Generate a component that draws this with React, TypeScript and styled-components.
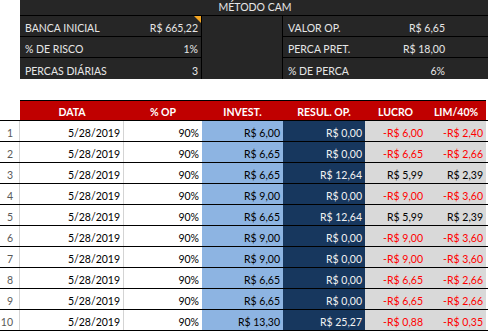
import React from "react";
import styled, { createGlobalStyle } from "styled-components";

const GlobalStyle = createGlobalStyle`
  body {
    margin: 0;
    background: #ffffff;
    font-family: Lato, "Liberation Sans", sans-serif;
    font-size: 10.5px;
  }
`;

interface Entry {
  data: string;
  op: string;
  invest: string;
  resul: string;
  lucro: string;
  lim: string;
}

const rows: Entry[] = [
  { data: "5/28/2019", op: "90%", invest: "R$ 6,00", resul: "R$ 0,00", lucro: "-R$ 6,00", lim: "-R$ 2,40" },
  { data: "5/28/2019", op: "90%", invest: "R$ 6,65", resul: "R$ 0,00", lucro: "-R$ 6,65", lim: "-R$ 2,66" },
  { data: "5/28/2019", op: "90%", invest: "R$ 6,65", resul: "R$ 12,64", lucro: "R$ 5,99", lim: "R$ 2,39" },
  { data: "5/28/2019", op: "90%", invest: "R$ 9,00", resul: "R$ 0,00", lucro: "-R$ 9,00", lim: "-R$ 3,60" },
  { data: "5/28/2019", op: "90%", invest: "R$ 6,65", resul: "R$ 12,64", lucro: "R$ 5,99", lim: "R$ 2,39" },
  { data: "5/28/2019", op: "90%", invest: "R$ 9,00", resul: "R$ 0,00", lucro: "-R$ 9,00", lim: "-R$ 3,60" },
  { data: "5/28/2019", op: "90%", invest: "R$ 9,00", resul: "R$ 0,00", lucro: "-R$ 9,00", lim: "-R$ 3,60" },
  { data: "5/28/2019", op: "90%", invest: "R$ 6,65", resul: "R$ 0,00", lucro: "-R$ 6,65", lim: "-R$ 2,66" },
  { data: "5/28/2019", op: "90%", invest: "R$ 6,65", resul: "R$ 0,00", lucro: "-R$ 6,65", lim: "-R$ 2,66" },
  { data: "5/28/2019", op: "90%", invest: "R$ 13,30", resul: "R$ 25,27", lucro: "-R$ 0,88", lim: "-R$ 0,35" },
];

const COLS = "20px 104px 78px 81px 82px 61px 60px 2px";

function App() {
  const neg = (v: string) => (v.startsWith("-") ? "#ff0000" : "#000000");

  return (
    <Page>
      <GlobalStyle />
      <Summary>
        <SummaryTitle>MÉTODO CAM</SummaryTitle>
        <LeftBlock>
          <SumRow>
            <span>BANCA INICIAL</span>
            <span>R$ 665,22</span>
            <CommentMark />
          </SumRow>
          <SumRow>
            <span>% DE RISCO</span>
            <span>1%</span>
          </SumRow>
          <SumRow>
            <span>PERCAS DIÁRIAS</span>
            <span>3</span>
          </SumRow>
        </LeftBlock>
        <MiddleBlock />
        <RightBlock>
          <SumRow $wide>
            <span>VALOR OP.</span>
            <span>R$ 6,65</span>
          </SumRow>
          <SumRow $wide>
            <span>PERCA PRET.</span>
            <span>R$ 18,00</span>
          </SumRow>
          <SumRow $wide>
            <span>% DE PERCA</span>
            <span>6%</span>
          </SumRow>
        </RightBlock>
      </Summary>

      <Table>
        <HeaderRow>
          <Blank />
          <HeadCell>DATA</HeadCell>
          <HeadCell>% OP</HeadCell>
          <HeadCell>INVEST.</HeadCell>
          <HeadCell>RESUL. OP.</HeadCell>
          <HeadCell>LUCRO</HeadCell>
          <HeadCell>LIM/40%</HeadCell>
          <Blank />
        </HeaderRow>
        {rows.map((r, i) => (
          <Row key={i}>
            <RowNum>{i + 1}</RowNum>
            <Cell $line>{r.data}</Cell>
            <Cell>{r.op}</Cell>
            <Cell $bg="#8db4e2">{r.invest}</Cell>
            <Cell $bg="#17375e" $color="#f2f2f2">{r.resul}</Cell>
            <Cell $bg="#d9d9d9" $color={neg(r.lucro)}>{r.lucro}</Cell>
            <Cell $bg="#d9d9d9" $color={neg(r.lim)}>{r.lim}</Cell>
            <Blank />
          </Row>
        ))}
      </Table>
    </Page>
  );
}

const Page = styled.div`
  width: 488px;
  height: 332px;
  overflow: hidden;
`;

const Summary = styled.div`
  margin-left: 20px;
  width: 468px;
  height: 79px;
  background: #262626;
  color: #e6e6e6;
  display: grid;
  grid-template-columns: 182px 81px 205px;
  grid-template-rows: 16px 63px;
`;

const SummaryTitle = styled.div`
  grid-column: 1 / -1;
  border-bottom: 1px solid #000;
  box-sizing: border-box;
  text-align: center;
  line-height: 14px;
  padding-left: 2px;
`;

const LeftBlock = styled.div`
  display: flex;
  flex-direction: column;
  border-right: 1px solid #000;
`;

const MiddleBlock = styled.div`
  border-right: 1px solid #000;
`;

const RightBlock = styled.div`
  display: flex;
  flex-direction: column;
`;

const SumRow = styled.div<{ $wide?: boolean }>`
  position: relative;
  height: 21px;
  box-sizing: border-box;
  border-bottom: 1px solid #000;
  display: flex;
  align-items: flex-end;
  justify-content: space-between;
  padding: 0 ${(p) => (p.$wide ? "43px" : "3px")} 2px 5px;

  &:last-child {
    border-bottom: none;
  }
`;

const CommentMark = styled.div`
  position: absolute;
  top: 0;
  right: 0;
  width: 0;
  height: 0;
  border-top: 7px solid #f5a623;
  border-left: 7px solid transparent;
`;

const Table = styled.div`
  margin-top: 21px;
  display: flex;
  flex-direction: column;
`;

const HeaderRow = styled.div`
  display: grid;
  grid-template-columns: ${COLS};
  height: 21px;
  box-sizing: border-box;
  border-bottom: 1px solid #000;
`;

const HeadCell = styled.div`
  background: #c00000;
  color: #ffffff;
  font-weight: bold;
  border-top: 1px solid #000;
  display: flex;
  align-items: flex-end;
  justify-content: center;
  padding-bottom: 2px;
`;

const Blank = styled.div``;

const Row = styled.div`
  display: grid;
  grid-template-columns: ${COLS};
  height: 21px;
  box-sizing: border-box;
  border-bottom: 1px solid #000;
`;

const RowNum = styled.div`
  color: #595959;
  border-right: 1px solid #d4d4d4;
  display: flex;
  align-items: flex-end;
  justify-content: flex-end;
  padding: 0 6px 2px 0;
`;

const Cell = styled.div<{ $bg?: string; $color?: string; $line?: boolean }>`
  background: ${(p) => p.$bg || "transparent"};
  color: ${(p) => p.$color || "#000"};
  border-right: ${(p) => (p.$line ? "1px solid #d4d4d4" : "none")};
  display: flex;
  align-items: flex-end;
  justify-content: flex-end;
  padding: 0 3px 2px 0;
  white-space: nowrap;
`;

export default App;
